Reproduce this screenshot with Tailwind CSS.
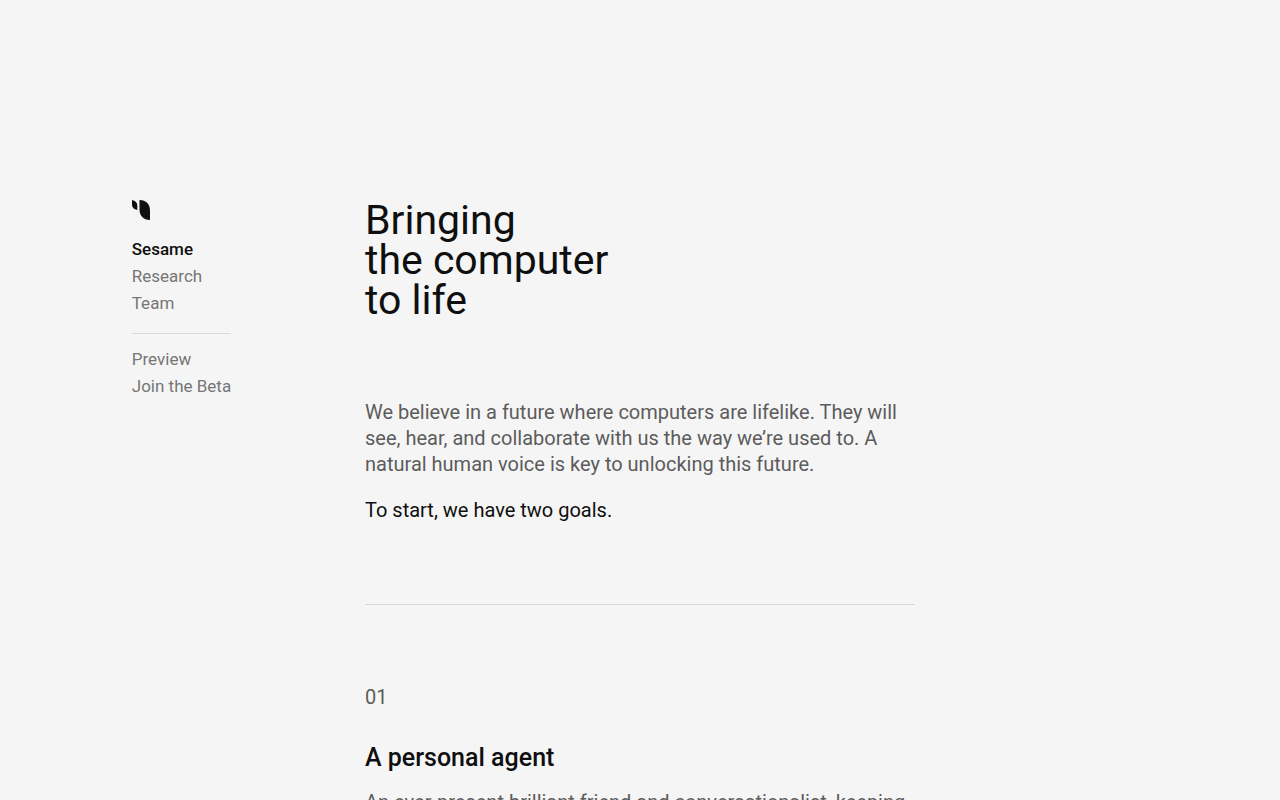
<!DOCTYPE html>
<html lang="en">
<head>
    <meta charset="UTF-8">
    <meta name="viewport" content="width=device-width, initial-scale=1.0">
    <title>Sesame</title>
    <script src="https://cdn.jsdelivr.net/npm/@tailwindcss/browser@4"></script>
</head>
<body class="bg-[#f5f5f5] text-[#0f0f0f] font-['Roboto','Liberation_Sans',sans-serif] min-h-screen">
    <div class="grid grid-cols-[1fr_minmax(0,550px)_1fr] items-start pt-50">
        <!-- Sidebar -->
        <nav class="justify-self-center pr-0.5" aria-label="Main">
            <a href="#" aria-label="Home" class="block w-5">
                <svg class="block w-5 h-5" viewBox="0 0 20 20" fill="currentColor" aria-hidden="true">
                    <path d="M0 0C3.4 0.6 5.3 2.6 5.3 5.5V10C1.9 9.5 0 7.6 0 4.6Z"/>
                    <path d="M7.5 0C14.3 0.2 18 4.2 18 10.5V20C11.2 19.8 7.5 15.8 7.5 9.5Z"/>
                </svg>
            </a>
            <ul class="mt-4 text-[17px]/[27px] text-[#757575]">
                <li><a href="#" class="font-medium text-[#0f0f0f]">Sesame</a></li>
                <li><a href="#research">Research</a></li>
                <li><a href="#team">Team</a></li>
            </ul>
            <hr class="my-3 mt-4 border-[#d9d9d9]">
            <ul class="text-[17px]/[27px] text-[#757575]">
                <li><a href="#preview">Preview</a></li>
                <li><a href="#beta">Join the Beta</a></li>
            </ul>
        </nav>

        <!-- Content -->
        <main class="text-xl/[26px] text-[#5c5c5c]">
            <h1 class="text-[41px]/10 text-[#0f0f0f]">Bringing<br>the computer<br>to life</h1>
            <p class="mt-[79px]">We believe in a future where computers are lifelike. They will see, hear, and collaborate with us the way we’re used to. A natural human voice is key to unlocking this future.</p>
            <p class="mt-5 text-[#0f0f0f]">To start, we have two goals.</p>
            <hr class="mt-[81px] mb-[79px] border-[#d9d9d9]">
            <section>
                <p>01</p>
                <h2 class="mt-8 text-[25px]/8 font-medium text-[#0f0f0f]">A personal agent</h2>
                <p class="mt-[15px]">An ever-present brilliant friend and conversationalist, keeping</p>
            </section>
        </main>
    </div>
</body>
</html>
